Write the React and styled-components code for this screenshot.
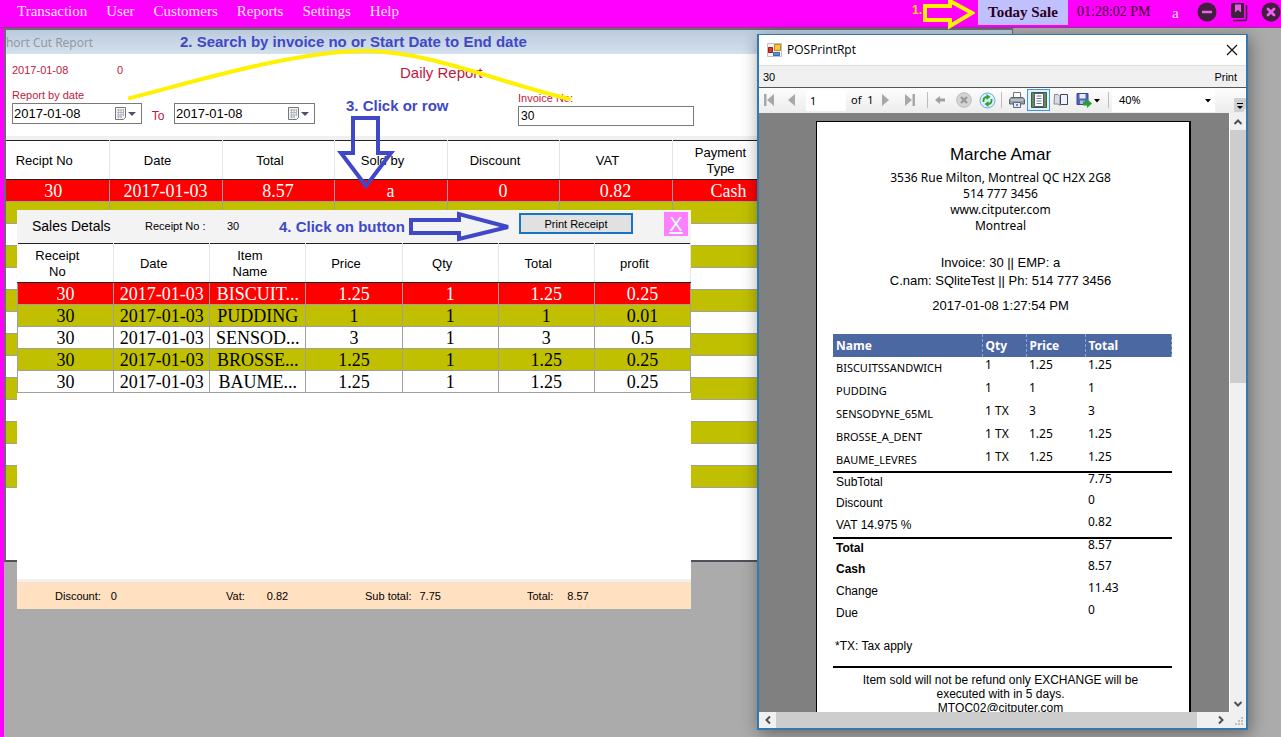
import React from "react";
import styled, { createGlobalStyle, css } from "styled-components";

const sans = `"Liberation Sans", Arial, sans-serif`;
const serif = `"Liberation Serif", "Times New Roman", serif`;
const humanist = `"Noto Sans", Tahoma, sans-serif`;
const segoe = `"Open Sans", "Segoe UI", sans-serif`;

const Global = createGlobalStyle`
  *, *::before, *::after { box-sizing: border-box; }
  body { margin: 0; background: #ababab; color: #000; font: 12px/16px ${sans}; }
  button, input, select { font: inherit; color: inherit; margin: 0; padding: 0; border: 0; background: none; border-radius: 0; }
  table { border-collapse: collapse; border-spacing: 0; }
  svg { display: block; flex: none; }
`;

/* ---------- application frame ---------- */

const Screen = styled.div`
  position: relative;
  display: flex;
  flex-direction: column;
  min-height: 100vh;
  overflow: hidden;
`;

const TopBar = styled.header`
  display: flex;
  justify-content: space-between;
  align-items: flex-start;
  height: 28px;
  padding-left: 17px;
  background: #ff00ff;
  border-bottom: 1px solid #a030a0;
  font: 15px/23px ${serif};
`;

const Menu = styled.nav`
  display: flex;
  gap: 19px;
`;

const MenuItem = styled.a`
  color: #ffe4ff;
  text-decoration: none;
`;

const Status = styled.div`
  display: flex;
  align-items: flex-start;
`;

const TodaySale = styled.button`
  width: 90px;
  height: 25px;
  margin-right: 9px;
  background: #c0c0ff;
  color: #2a0018;
  font: bold 15px/25px ${serif};
`;

const Clock = styled.time`
  width: 95px;
  color: #400030;
  font-size: 14px;
`;

const UserName = styled.span`
  width: 25px;
  color: #ffe4ff;
  line-height: 26px;
`;

const RoundTools = styled.div`
  display: flex;
  gap: 12px;
  padding-top: 2px;
`;

const RoundTool = styled.button`
  width: 20px;
  height: 20px;
`;

const Desktop = styled.main`
  position: relative;
  flex: 1;
  border-left: 4px solid #ff00ff;
  background: #ababab;
`;

/* ---------- report window ---------- */

const ReportWindow = styled.section`
  position: absolute;
  top: 0;
  left: 0;
  right: 268px;
  height: 534px;
  border: 2px solid #6b6b78;
  border-right-width: 1px;
  border-bottom: 2px solid #505058;
  background: #fff;
  overflow: hidden;
`;

const ReportTitle = styled.h1`
  margin: 0;
  height: 24px;
  background: linear-gradient(#bccbdc, #d3e0ee);
  color: #8f959c;
  font: 12px/25px ${segoe};
`;

const ReportForm = styled.form`
  height: 86px;
  padding: 8px 6px 0;
  color: #c01840;
  border-bottom: 4px solid #f0f0f0;
`;

const SummaryLine = styled.div`
  display: flex;
  align-items: flex-start;
  height: 22px;
  font-size: 11px;
`;

const SummaryText = styled.span`
  width: ${(p) => p.$width}px;
`;

const ReportHeading = styled.h2`
  margin: 0;
  font: 15px/22px ${sans};
`;

const FieldLine = styled.div`
  display: flex;
  align-items: flex-end;
  height: 42px;
`;

const Field = styled.div`
  display: flex;
  flex-direction: column;
  width: ${(p) => p.$width}px;
  margin-left: ${(p) => p.$before || 0}px;
  font-size: 11px;
  line-height: 15px;
`;

const DateBox = styled.div`
  display: flex;
  align-items: center;
  height: 21px;
  margin-bottom: 2px;
  padding: 0 4px 0 1px;
  border: 1px solid #7a7a7a;
  background: #fff;
`;

const DateInput = styled.input`
  flex: 1;
  min-width: 0;
  color: #000;
  font-size: 13px;
`;

const PickerButton = styled.button`
  width: 24px;
  height: 16px;
`;

const Between = styled.span`
  width: 32px;
  text-align: center;
  line-height: 20px;
`;

const InvoiceInput = styled.input`
  height: 20px;
  padding: 0 2px;
  border: 1px solid #7a7a7a;
  background: #fff;
  color: #000;
  font-size: 12px;
`;

/* ---------- data grids ---------- */

const Grid = styled.table`
  table-layout: fixed;
  width: ${(p) => p.$width}px;
  border-top: 1px solid #222;
  background: #fff;
  text-align: center;
`;

const GridHead = styled.th`
  height: 39px;
  padding: 2px 26px 0 ${(p) => (p.$clipped ? 0 : 10)}px;
  border-bottom: 1px solid #222;
  border-right: 1px solid #e4e4e4;
  font: 13px/16px ${sans};
`;

const tones = {
  red: css`background: #ff0000; color: #fff;`,
  olive: css`background: #c0c000;`,
  white: css`background: #fff;`,
};

const GridRow = styled.tr`
  height: 22px;
  ${(p) => tones[p.$tone]}
`;

const GridCell = styled.td`
  height: 22px;
  padding: 2px ${(p) => (p.$clipped ? 8 : 0)}px 0 0;
  border: 1px solid #a0a0a0;
  border-top-width: 0;
  border-left-width: ${(p) => (p.$edge ? 1 : 0)}px;
  font: 18px/19px ${serif};
  white-space: nowrap;
  overflow: hidden;
`;

/* ---------- sales details ---------- */

const Details = styled.section`
  position: absolute;
  top: 182px;
  left: 13px;
  width: 674px;
  height: 399px;
  display: flex;
  flex-direction: column;
  background: #fff;
`;

const DetailsBar = styled.div`
  display: flex;
  align-items: center;
  height: 33px;
  padding: 0 3px 2px 15px;
  background: #f3f3f3;
  font-size: 11px;
`;

const DetailsTitle = styled.h2`
  margin: 0;
  width: 113px;
  font: 14px/16px ${sans};
`;

const DetailsLabel = styled.span`
  width: ${(p) => p.$width}px;
`;

const PrintReceipt = styled.button`
  width: 114px;
  height: 21px;
  margin: 0 31px 4px auto;
  border: 2px solid #1874c0;
  background: #e1e1e1;
  font-size: 11px;
`;

const CloseDetails = styled.button`
  width: 24px;
  height: 24px;
  margin-bottom: 4px;
  background: #ff80ff;
  color: #e0ffff;
  font-size: 20px;
  line-height: 24px;
  text-decoration: underline;
`;

const DetailsFill = styled.div`
  flex: 1;
  border-bottom: 3px solid #f0f0f0;
`;

const Totals = styled.footer`
  display: grid;
  grid-template-columns: 171px 139px 162px 1fr;
  align-items: center;
  height: 27px;
  padding-left: 38px;
  background: #ffe0c0;
  font-size: 11px;
`;

const TotalPair = styled.span`
  display: flex;
  gap: ${(p) => p.$gap}px;
`;

/* ---------- print preview window ---------- */

const Preview = styled.section`
  position: absolute;
  top: 6px;
  right: 33px;
  bottom: 7px;
  width: 491px;
  display: flex;
  flex-direction: column;
  border: 2px solid #3478b0;
  border-top-width: 1px;
  background: #f0f0f0;
  box-shadow: 2px 4px 16px rgba(0, 0, 0, 0.4);
`;

const PreviewTitle = styled.header`
  display: flex;
  align-items: center;
  gap: 5px;
  height: 31px;
  padding: 0 7px 0 8px;
  background: #fff;
  border-bottom: 1px solid #dcdcdc;
  font: 12px/16px ${segoe};
`;

const CloseWindow = styled.button`
  margin-left: auto;
  width: 14px;
  height: 14px;
`;

const PreviewStrip = styled.div`
  display: flex;
  justify-content: space-between;
  align-items: center;
  height: 22px;
  padding: 0 9px 0 4px;
  border-bottom: 1px solid #555;
  font-size: 11px;
`;

const Toolbar = styled.div`
  display: flex;
  align-items: center;
  height: 25px;
  padding: 0 0 1px 4px;
  background: linear-gradient(#fdfdfd, #ececec);
  font: 11px/16px ${humanist};
`;

const ToolButton = styled.button`
  display: flex;
  align-items: center;
  justify-content: center;
  flex: none;
  width: ${(p) => p.$width}px;
  height: 22px;
  ${(p) => p.$active && css`border: 1px solid #3c96e0; background: #e4f0fb;`}
`;

const PageInput = styled.input`
  width: 40px;
  height: 21px;
  padding-left: 4px;
  background: #fff;
`;

const PageCount = styled.span`
  width: 33px;
  padding-left: 5px;
  white-space: nowrap;
`;

const Divider = styled.span`
  width: 1px;
  height: 16px;
  margin: 0 ${(p) => p.$gap}px;
  background: #bdbdbd;
`;

const ZoomBox = styled.div`
  position: relative;
  display: flex;
  align-items: center;
  width: 103px;
  height: 23px;
  background: #fff;
`;

const ZoomSelect = styled.select`
  appearance: none;
  width: 100%;
  padding-left: 7px;
  font-size: 11px;
`;

const ZoomArrow = styled.svg`
  position: absolute;
  right: 4px;
  top: 10px;
  pointer-events: none;
`;

const Overflow = styled.button`
  align-self: flex-end;
  margin-left: auto;
  width: 12px;
  height: 14px;
`;

const Viewer = styled.div`
  flex: 1;
  min-height: 0;
  display: grid;
  grid-template-columns: 1fr 17px;
  grid-template-rows: minmax(0, 1fr) 16px;
`;

const Canvas = styled.div`
  overflow: hidden;
  padding: 8px 38px 0 57px;
  background: #808080;
`;

const VScroll = styled.div`
  display: grid;
  grid-template-rows: 17px 253px 1fr 17px;
  border-left: 1px solid #fff;
`;

const HScroll = styled.div`
  display: grid;
  grid-template-columns: 17px 1fr 15px 17px;
`;

const Thumb = styled.div`
  background: #cdcdcd;
`;

const ScrollButton = styled.button`
  display: flex;
  align-items: center;
  justify-content: center;
`;

const Grip = styled.div`
  display: flex;
  align-items: flex-end;
  justify-content: flex-end;
  padding: 2px;
`;

/* ---------- receipt ---------- */

const Paper = styled.article`
  min-height: 700px;
  padding: 23px 17px 0 16px;
  border: 1px solid #000;
  border-right-width: 2px;
  background: #fff;
  text-align: center;
`;

const ShopName = styled.h2`
  margin: 0 0 5px;
  padding-right: 4px;
  font: 17px/20px ${sans};
`;

const ShopLines = styled.address`
  padding-right: 4px;
  margin-bottom: 20px;
  font: normal 12px/16px ${humanist};
`;

const InvoiceLines = styled.div`
  padding-right: 4px;
  margin-bottom: 7px;
  font-size: 13px;
  line-height: 18px;
`;

const PrintedAt = styled.div`
  padding-right: 4px;
  margin-bottom: 19px;
  font-size: 13px;
  line-height: 18px;
`;

const Receipt = styled.table`
  width: 100%;
  table-layout: fixed;
  text-align: left;
  font: 12px/16px ${humanist};
`;

const ReceiptHead = styled.th`
  height: 23px;
  padding: 0 3px;
  background: #4c68a2;
  color: #fff;
  border-right: 1px dashed #8ea4d2;
  font-size: 12px;
`;

const ReceiptGroup = styled.tbody`
  ${(p) => p.$ruled && css`border-top: 2px solid #000; line-height: 12px;`}
`;

const ReceiptName = styled.td`
  height: ${(p) => p.$height}px;
  padding: 3px 0 0 3px;
  vertical-align: top;
  font-family: ${(p) => (p.$total ? sans : humanist)};
  font-size: ${(p) => (p.$total ? 12 : 11)}px;
  font-weight: ${(p) => (p.$bold ? "bold" : "normal")};
`;

const ReceiptValue = styled.td`
  padding: 0 0 0 3px;
  vertical-align: top;
`;

const TaxNote = styled.p`
  margin: 12px 0;
  padding-left: 2px;
  text-align: left;
  font-size: 12px;
  line-height: 16px;
`;

const Policy = styled.p`
  margin: 0;
  padding: 5px 22px 0 18px;
  border-top: 2px solid #000;
  font-size: 12px;
  line-height: 14px;
`;

/* ---------- tutorial marks drawn over the windows ---------- */

const Marks = styled.svg`
  position: absolute;
  inset: 0;
  width: 100%;
  height: 100%;
  pointer-events: none;
`;

const StepMark = styled.svg`
  position: absolute;
  top: 0;
  right: 306px;
  pointer-events: none;
`;

const Step = styled.p`
  position: absolute;
  top: ${(p) => p.$top}px;
  left: ${(p) => p.$left}px;
  margin: 0;
  color: #4048c8;
  font: bold 15px/18px ${sans};
  white-space: nowrap;
`;

const FirstStep = styled.span`
  padding-right: 56px;
  color: #ffd820;
  font: bold 12px/20px ${sans};
`;

/* ---------- drawings ---------- */

const Calendar = () => (
  <svg width="24" height="16" viewBox="0 0 24 16">
    <path d="M2.500 1.500h10v10l-2 2h-8z" fill="#f4f4f4" stroke="#777" />
    <path d="M4 4h7M4 6.500h7M4 9h7M4 11h5M5.500 3v9M8 3v9M10.500 3v7" stroke="#b0b6c0" fill="none" />
    <path d="M15 6h8l-4 4z" fill="#4a5568" />
  </svg>
);

const MinusIcon = () => (
  <svg width="20" height="20" viewBox="0 0 20 20">
    <circle cx="10" cy="10" r="9.500" fill="#40203c" />
    <path d="M5 10h10" stroke="#f060f0" strokeWidth="2.500" />
  </svg>
);

const BookIcon = () => (
  <svg width="20" height="20" viewBox="0 0 20 20">
    <path d="M4 1h11v15H4q-2 0-2-2V3q0-2 2-2z" fill="#40203c" />
    <path d="M4 18.500h11.500q2 0 2-2V3" fill="none" stroke="#40203c" strokeWidth="1.600" />
    <path d="M6 2.500h6v8l-3-2.500-3 2.500z" fill="#e060e0" />
  </svg>
);

const CloseIcon = () => (
  <svg width="20" height="20" viewBox="0 0 20 20">
    <circle cx="10" cy="10" r="9.500" fill="#40203c" />
    <path d="M7 7l6 6M13 7l-6 6" stroke="#f060f0" strokeWidth="2.800" strokeLinecap="round" />
  </svg>
);

const FormIcon = () => (
  <svg width="15" height="14" viewBox="0 0 15 14">
    <path d="M.5.5h14v13H.5z" fill="#f4f4f4" stroke="#c0c0c8" />
    <path d="M7.500 1.500h6v6h-6z" fill="#f8c838" stroke="#b88818" />
    <path d="M1.500 4.500h4v5h-4z" fill="#d83828" stroke="#902018" />
    <path d="M6.500 9.500h6v3h-6z" fill="#5890e0" stroke="#3868b0" />
  </svg>
);

const NavIcon = ({ flip, bar }) => (
  <svg width="12" height="12" viewBox="0 0 12 12" transform={flip ? "scale(-1 1)" : undefined}>
    <path d={bar ? "M11 0v12L4 6z" : "M10 0v12L3 6z"} fill="#a8a8a8" />
    {bar && <path d="M1 0h2.500v12H1z" fill="#a8a8a8" />}
  </svg>
);

const BackIcon = () => (
  <svg width="10" height="10" viewBox="0 0 10 10">
    <path d="M0 5l5-4v2.500h5v3H5V9z" fill="#a0a0a0" />
  </svg>
);

const StopIcon = () => (
  <svg width="16" height="16" viewBox="0 0 16 16">
    <circle cx="8" cy="8" r="7.300" fill="#d4d4d4" stroke="#bcbcbc" />
    <path d="M5 5l6 6M11 5l-6 6" stroke="#989898" strokeWidth="2.400" />
  </svg>
);

const RefreshIcon = () => (
  <svg width="17" height="17" viewBox="0 0 17 17">
    <circle cx="8.500" cy="8.500" r="7.500" fill="#dcf0fc" stroke="#6cacd8" />
    <path d="M4.500 10V8Q5 5 8 5M12.500 7v2Q12 12 9 12" fill="none" stroke="#30a038" strokeWidth="1.800" />
    <path d="M7.500 2l4 3-4 3zM9.500 9l-4 3 4 3z" fill="#30a038" />
  </svg>
);

const PrinterIcon = () => (
  <svg width="16" height="16" viewBox="0 0 16 16">
    <path d="M4.500 6V.5h7V6" fill="#fff" stroke="#778" />
    <path d="M2 5.500h12l1.500 2V12H.5V7.500z" fill="#989ea8" stroke="#5c636e" />
    <path d="M2 8h12" stroke="#dde" />
    <path d="M4.500 10.500h7v5h-7z" fill="#e0ecf8" stroke="#667" />
    <path d="M7 12h2v2H7z" fill="#4890d8" />
  </svg>
);

const LayoutIcon = () => (
  <svg width="16" height="16" viewBox="0 0 16 16">
    <path d="M.5.5h15v15H.5z" fill="#5c9058" stroke="#386048" />
    <path d="M3.500 1.500h9v13h-9z" fill="#fff" stroke="#557" />
    <path d="M5.500 4h5M5.500 6.500h5M5.500 9h5M5.500 11.500h5" stroke="#6878a0" />
  </svg>
);

const SetupIcon = () => (
  <svg width="16" height="14" viewBox="0 0 16 14">
    <path d="M1.500 1.500h3.500l2 2v9l-2-1.500h-4z" fill="#d8dce4" stroke="#889" />
    <path d="M7.500 1.500h7v10h-7z" fill="#eef4fc" stroke="#445" />
  </svg>
);

const ExportIcon = () => (
  <svg width="24" height="16" viewBox="0 0 24 16">
    <path d="M1 1.500h11v11H1z" fill="#5064b8" stroke="#384890" />
    <path d="M3.500 2h6v4.500h-6z" fill="#e4ecfc" />
    <path d="M4 8.500h5V12H4z" fill="#b0bce0" />
    <path d="M7 9.500h4V7l5 4.500-5 4.500v-2.500H7z" fill="#28a030" />
    <path d="M18 7h6l-3 3.500z" fill="#000" />
  </svg>
);

const Chevron = ({ turn }) => (
  <svg width="10" height="10" viewBox="0 0 10 10">
    <path d="M1.500 7L5 3.500 8.500 7" transform={`rotate(${turn} 5 5)`} fill="none" stroke="#505050" strokeWidth="2" />
  </svg>
);

/* ---------- data ---------- */

const menu = ["Transaction", "User", "Customers", "Reports", "Settings", "Help"];

const reportColumns = [
  ["Recipt No", 103],
  ["Date", 113],
  ["Total", 112],
  ["Sold by", 113],
  ["Discount", 112],
  ["VAT", 113],
  ["Payment Type", 113],
];
const reportRow = ["30", "2017-01-03", "8.57", "a", "0", "0.82", "Cash"];
const emptyRows = Array.from({ length: 13 }, (_, i) => i);

const detailColumns = ["Receipt No", "Date", "Item Name", "Price", "Qty", "Total", "profit"];
const detailRows = [
  ["30", "2017-01-03", "BISCUIT...", "1.25", "1", "1.25", "0.25"],
  ["30", "2017-01-03", "PUDDING", "1", "1", "1", "0.01"],
  ["30", "2017-01-03", "SENSOD...", "3", "1", "3", "0.5"],
  ["30", "2017-01-03", "BROSSE...", "1.25", "1", "1.25", "0.25"],
  ["30", "2017-01-03", "BAUME...", "1.25", "1", "1.25", "0.25"],
];

const receiptItems = [
  ["BISCUITSSANDWICH", "1", "1.25", "1.25"],
  ["PUDDING", "1", "1", "1"],
  ["SENSODYNE_65ML", "1 TX", "3", "3"],
  ["BROSSE_A_DENT", "1 TX", "1.25", "1.25"],
  ["BAUME_LEVRES", "1 TX", "1.25", "1.25"],
];
const receiptSums = [
  [["SubTotal", "7.75"], ["Discount", "0"], ["VAT 14.975 %", "0.82"]],
  [["Total", "8.57", true], ["Cash", "8.57", true], ["Change", "11.43"], ["Due", "0"]],
];

const tone = (i) => (i === 0 ? "red" : i % 2 ? "olive" : "white");

function DateField({ id, label, width }) {
  return (
    <Field $width={width}>
      {label && <label htmlFor={id}>{label}</label>}
      <DateBox>
        <DateInput id={id} defaultValue="2017-01-08" />
        <PickerButton type="button" aria-label="Open calendar"><Calendar /></PickerButton>
      </DateBox>
    </Field>
  );
}

function Report() {
  return (
    <ReportWindow>
      <ReportTitle>hort Cut Report</ReportTitle>
      <ReportForm>
        <SummaryLine>
          <SummaryText $width={105}>2017-01-08</SummaryText>
          <SummaryText $width={283}>0</SummaryText>
          <ReportHeading>Daily Report</ReportHeading>
        </SummaryLine>
        <FieldLine>
          <DateField id="from" label="Report by date" width={130} />
          <Between as="label" htmlFor="to">To</Between>
          <DateField id="to" width={141} />
          <Field $width={176} $before={203}>
            <label htmlFor="invoice">Invoice No:</label>
            <InvoiceInput id="invoice" defaultValue="30" />
          </Field>
        </FieldLine>
      </ReportForm>
      <Grid $width={779}>
        <colgroup>
          {reportColumns.map(([name, width]) => <col key={name} width={width} />)}
        </colgroup>
        <thead>
          <tr>
            {reportColumns.map(([name], i) => <GridHead key={name} $clipped={i === 0}>{name}</GridHead>)}
          </tr>
        </thead>
        <tbody>
          <GridRow $tone="red">
            {reportRow.map((v, i) => <GridCell key={i} $clipped={i === 0}>{v}</GridCell>)}
          </GridRow>
          {emptyRows.map((r) => (
            <GridRow key={r} $tone={tone(r + 1)}>
              {reportColumns.map(([name]) => <GridCell key={name} />)}
            </GridRow>
          ))}
        </tbody>
      </Grid>
    </ReportWindow>
  );
}

function SalesDetails() {
  return (
    <Details>
      <DetailsBar>
        <DetailsTitle>Sales Detals</DetailsTitle>
        <DetailsLabel $width={82}>Receipt No :</DetailsLabel>
        <DetailsLabel $width={30}>30</DetailsLabel>
        <PrintReceipt>Print Receipt</PrintReceipt>
        <CloseDetails>X</CloseDetails>
      </DetailsBar>
      <Grid $width={674}>
        <thead>
          <tr>
            {detailColumns.map((name) => <GridHead key={name}>{name}</GridHead>)}
          </tr>
        </thead>
        <tbody>
          {detailRows.map((row, r) => (
            <GridRow key={r} $tone={tone(r)}>
              {row.map((v, i) => <GridCell key={i} $edge={i === 0}>{v}</GridCell>)}
            </GridRow>
          ))}
        </tbody>
      </Grid>
      <DetailsFill />
      <Totals>
        <TotalPair $gap={10}><span>Discount:</span><span>0</span></TotalPair>
        <TotalPair $gap={22}><span>Vat:</span><span>0.82</span></TotalPair>
        <TotalPair $gap={8}><span>Sub total:</span><span>7.75</span></TotalPair>
        <TotalPair $gap={14}><span>Total:</span><span>8.57</span></TotalPair>
      </Totals>
    </Details>
  );
}

function ReceiptPaper() {
  return (
    <Paper>
      <ShopName>Marche Amar</ShopName>
      <ShopLines>
        3536 Rue Milton, Montreal QC H2X 2G8<br />514 777 3456<br />www.citputer.com<br />Montreal
      </ShopLines>
      <InvoiceLines>
        Invoice: 30 || EMP: a<br />C.nam: SQliteTest || Ph: 514 777 3456
      </InvoiceLines>
      <PrintedAt>2017-01-08 1:27:54 PM</PrintedAt>
      <Receipt>
        <colgroup><col width="149" /><col width="44" /><col width="59" /><col /></colgroup>
        <thead>
          <tr>
            {["Name", "Qty", "Price", "Total"].map((h) => <ReceiptHead key={h}>{h}</ReceiptHead>)}
          </tr>
        </thead>
        <ReceiptGroup>
          {receiptItems.map(([name, ...values]) => (
            <tr key={name}>
              <ReceiptName $height={23}>{name}</ReceiptName>
              {values.map((v, i) => <ReceiptValue key={i}>{v}</ReceiptValue>)}
            </tr>
          ))}
        </ReceiptGroup>
        {receiptSums.map((group, g) => (
          <ReceiptGroup key={g} $ruled>
            {group.map(([name, value, bold]) => (
              <tr key={name}>
                <ReceiptName colSpan={3} $height={22} $total $bold={bold}>{name}</ReceiptName>
                <ReceiptValue>{value}</ReceiptValue>
              </tr>
            ))}
          </ReceiptGroup>
        ))}
      </Receipt>
      <TaxNote>*TX: Tax apply</TaxNote>
      <Policy>
        Item sold will not be refund only EXCHANGE will be executed with in 5 days.<br />
        MTQC02@citputer.com
      </Policy>
    </Paper>
  );
}

function PrintPreview() {
  return (
    <Preview>
      <PreviewTitle>
        <FormIcon />
        <span>POSPrintRpt</span>
        <CloseWindow aria-label="Close">
          <svg width="14" height="14" viewBox="0 0 14 14">
            <path d="M2 2l10 10M12 2L2 12" stroke="#111" strokeWidth="1.200" />
          </svg>
        </CloseWindow>
      </PreviewTitle>
      <PreviewStrip><span>30</span><span>Print</span></PreviewStrip>
      <Toolbar>
        <ToolButton $width={12} aria-label="First page"><NavIcon bar /></ToolButton>
        <ToolButton $width={31} aria-label="Previous page"><NavIcon /></ToolButton>
        <PageInput aria-label="Page" defaultValue="1" />
        <PageCount>of &nbsp;1</PageCount>
        <ToolButton $width={14} aria-label="Next page"><NavIcon flip /></ToolButton>
        <ToolButton $width={33} aria-label="Last page"><NavIcon flip bar /></ToolButton>
        <Divider $gap={1} />
        <ToolButton $width={22} aria-label="Back"><BackIcon /></ToolButton>
        <ToolButton $width={26} aria-label="Stop"><StopIcon /></ToolButton>
        <ToolButton $width={20} aria-label="Refresh"><RefreshIcon /></ToolButton>
        <Divider $gap={4} />
        <ToolButton $width={21} aria-label="Print"><PrinterIcon /></ToolButton>
        <ToolButton $width={23} $active aria-label="Print layout"><LayoutIcon /></ToolButton>
        <ToolButton $width={21} aria-label="Page setup"><SetupIcon /></ToolButton>
        <ToolButton $width={34} aria-label="Export"><ExportIcon /></ToolButton>
        <Divider $gap={3} />
        <ZoomBox>
          <ZoomSelect aria-label="Zoom"><option>40%</option></ZoomSelect>
          <ZoomArrow width="6" height="4" viewBox="0 0 6 4"><path d="M0 0h6L3 3.500z" /></ZoomArrow>
        </ZoomBox>
        <Overflow aria-label="More">
          <svg width="12" height="14" viewBox="0 0 12 14">
            <path d="M0 0h12v10l-3 4H0z" fill="#d0d0d0" />
            <path d="M3 5.500h6" stroke="#000" />
            <path d="M3 8h6l-3 3z" fill="#000" />
          </svg>
        </Overflow>
      </Toolbar>
      <Viewer>
        <Canvas><ReceiptPaper /></Canvas>
        <VScroll>
          <ScrollButton aria-label="Scroll up"><Chevron turn={0} /></ScrollButton>
          <Thumb />
          <span />
          <ScrollButton aria-label="Scroll down"><Chevron turn={180} /></ScrollButton>
        </VScroll>
        <HScroll>
          <ScrollButton aria-label="Scroll left"><Chevron turn={270} /></ScrollButton>
          <Thumb />
          <span />
          <ScrollButton aria-label="Scroll right"><Chevron turn={90} /></ScrollButton>
        </HScroll>
        <Grip>
          <svg width="9" height="9" viewBox="0 0 9 9">
            <path d="M6 0h2v2H6zM3 3h2v2H3zM6 3h2v2H6zM0 6h2v2H0zM3 6h2v2H3zM6 6h2v2H6z" fill="#bfbfbf" />
          </svg>
        </Grip>
      </Viewer>
    </Preview>
  );
}

export default function App() {
  return (
    <Screen>
      <Global />
      <TopBar>
        <Menu>
          {menu.map((m) => <MenuItem key={m} href="#">{m}</MenuItem>)}
        </Menu>
        <Status>
          <FirstStep>1.</FirstStep>
          <TodaySale>Today Sale</TodaySale>
          <Clock>01:28:02 PM</Clock>
          <UserName>a</UserName>
          <RoundTools>
            <RoundTool aria-label="Minimize"><MinusIcon /></RoundTool>
            <RoundTool aria-label="Notes"><BookIcon /></RoundTool>
            <RoundTool aria-label="Exit"><CloseIcon /></RoundTool>
          </RoundTools>
        </Status>
      </TopBar>
      <Desktop>
        <Report />
        <SalesDetails />
        <PrintPreview />
      </Desktop>
      <Marks fill="none" strokeLinecap="round" strokeWidth="4">
        <path d="M130 98C180 86 290 51 365 51C430 51 500 83 569 99" stroke="#fff200" />
        <path d="M353 118H378V153H391L366 186L341 153H353Z" stroke="#4048c8" />
        <path d="M411 220H459V214L508 227L459 239V233H411Z" stroke="#4048c8" />
      </Marks>
      <StepMark width="54" height="30" viewBox="0 0 54 30">
        <path d="M4 6H29V1L51 13L29 26V20H4Z" fill="none" stroke="#fff200" strokeWidth="4" />
      </StepMark>
      <Step $top={33} $left={180}>2. Search by invoice no or Start Date to End date</Step>
      <Step $top={97} $left={346}>3. Click or row</Step>
      <Step $top={218} $left={279}>4. Click on button</Step>
    </Screen>
  );
}
